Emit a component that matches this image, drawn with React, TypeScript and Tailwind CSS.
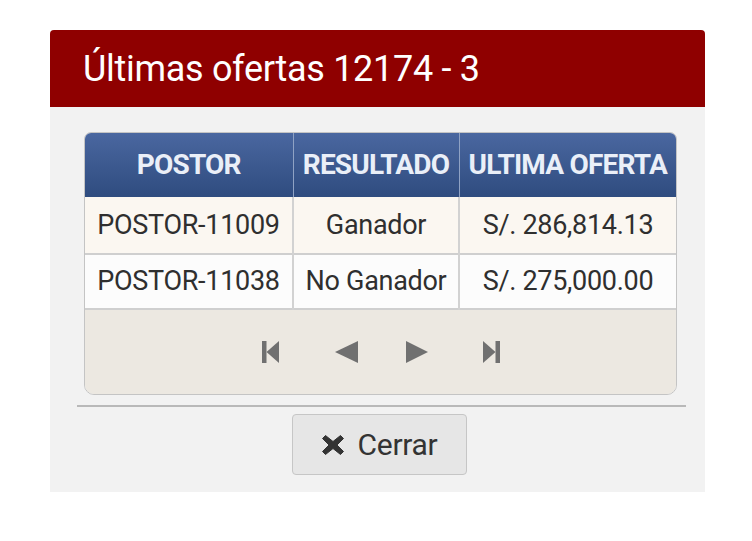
const rows = [
  { postor: 'POSTOR-11009', resultado: 'Ganador', oferta: 'S/. 286,814.13' },
  { postor: 'POSTOR-11038', resultado: 'No Ganador', oferta: 'S/. 275,000.00' },
];

function FirstIcon() {
  return (
    <svg width="17" height="24" viewBox="0 0 17 24" className="fill-[#707070]">
      <rect x="0" y="1" width="4.5" height="22" />
      <polygon points="17,1 17,23 4.5,12" />
    </svg>
  );
}

function PrevIcon() {
  return (
    <svg width="23" height="22" viewBox="0 0 23 22" className="fill-[#707070]">
      <polygon points="23,0 23,22 0,11" />
    </svg>
  );
}

function NextIcon() {
  return (
    <svg width="22" height="22" viewBox="0 0 22 22" className="fill-[#707070]">
      <polygon points="0,0 0,22 22,11" />
    </svg>
  );
}

function LastIcon() {
  return (
    <svg width="17" height="24" viewBox="0 0 17 24" className="fill-[#707070]">
      <polygon points="0,1 0,23 12.5,12" />
      <rect x="12.5" y="1" width="4.5" height="22" />
    </svg>
  );
}

export default function App() {
  return (
    <div className="w-[752px] h-[541px] bg-white pt-[30px] pl-[50px] font-['Roboto',sans-serif]">
      <div className="w-[655px] h-[462px] bg-[#f2f2f2] rounded-t-[4px] overflow-hidden flex flex-col">
        <div className="h-[77px] bg-[#8f0000] flex items-center pl-[33px]">
          <h1 className="text-[36px] text-white tracking-[-0.3px] leading-none">Últimas ofertas 12174 - 3</h1>
        </div>

        <div className="pt-[25px] flex flex-col">
          <div className="ml-[34px] w-[593px] border border-[#c4c4c4] rounded-t-[7px] rounded-b-[10px] overflow-hidden">
            <table className="w-full border-collapse table-fixed">
              <colgroup>
                <col className="w-[208px]" />
                <col className="w-[166px]" />
                <col />
              </colgroup>
              <thead>
                <tr className="h-[64px] bg-gradient-to-b from-[#4a67a0] to-[#2f4c7f]">
                  <th className="text-[28px] font-bold text-[#eaeff8] tracking-[-0.8px] text-center border-r border-[#8fa2c4]">POSTOR</th>
                  <th className="text-[28px] font-bold text-[#eaeff8] tracking-[-0.8px] text-center border-r border-[#8fa2c4] whitespace-nowrap">RESULTADO</th>
                  <th className="text-[28px] font-bold text-[#eaeff8] tracking-[-0.8px] text-center whitespace-nowrap">ULTIMA OFERTA</th>
                </tr>
              </thead>
              <tbody>
                {rows.map((r, i) => (
                  <tr
                    key={r.postor}
                    className={(i === 0 ? 'bg-[#fbf7f1] h-[57px]' : 'bg-[#fcfcfc] h-[55px]') + ' border-b-2 border-[#cfcfcf]'}
                  >
                    <td className="text-[27px] text-[#2f2f2f] text-center border-r-2 border-[#d2d2d2] tracking-[-0.3px] whitespace-nowrap">{r.postor}</td>
                    <td className="text-[27px] text-[#2f2f2f] text-center border-r-2 border-[#d2d2d2] tracking-[-0.3px] whitespace-nowrap">{r.resultado}</td>
                    <td className="text-[27px] text-[#2f2f2f] text-center tracking-[-0.3px] whitespace-nowrap">{r.oferta}</td>
                  </tr>
                ))}
              </tbody>
            </table>
            <div className="h-[84px] bg-[#ece8e1] flex items-center justify-center">
              <FirstIcon />
              <div className="w-[56px]" />
              <PrevIcon />
              <div className="w-[48px]" />
              <NextIcon />
              <div className="w-[55px]" />
              <LastIcon />
            </div>
          </div>

          <div className="ml-[27px] w-[609px] h-[2px] bg-[#b9b9b9] mt-[10px]" />

          <div className="ml-[27px] w-[609px] flex justify-center pt-[7px]">
            <button className="w-[175px] h-[61px] bg-[#e6e6e6] border border-[#c6c6c6] rounded-[4px] flex items-center justify-center gap-[14px] text-[30px] text-[#333333] -translate-x-[2px]">
              <svg width="22" height="20" viewBox="0 0 22 20" className="fill-[#333333]">
                <path d="M3.5 0.5 L11 6.5 L18.5 0.5 L21.5 3.5 L15 10 L21.5 16.5 L18.5 19.5 L11 13.5 L3.5 19.5 L0.5 16.5 L7 10 L0.5 3.5 Z" strokeLinejoin="round" stroke="#333333" strokeWidth="1" />
              </svg>
              <span className="tracking-[-0.3px]">Cerrar</span>
            </button>
          </div>
        </div>
      </div>
    </div>
  );
}
